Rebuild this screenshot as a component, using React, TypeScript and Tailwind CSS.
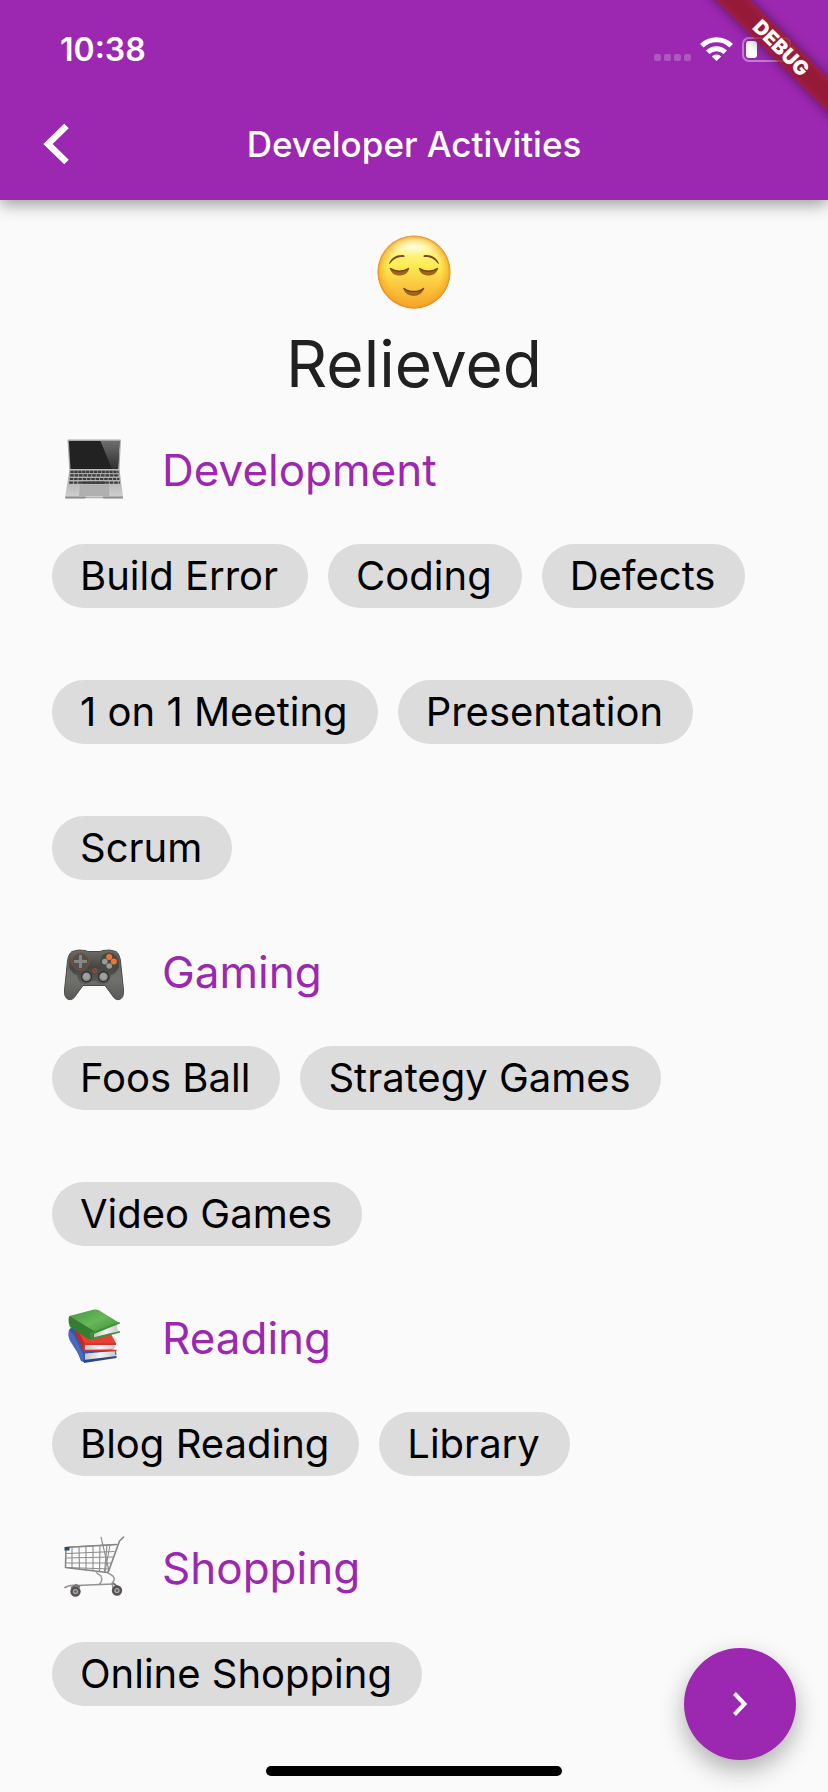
const sections = [
  { title: 'Development', Icon: LaptopIcon, items: ['Build Error', 'Coding', 'Defects', '1 on 1 Meeting', 'Presentation', 'Scrum'] },
  { title: 'Gaming', Icon: GamepadIcon, items: ['Foos Ball', 'Strategy Games', 'Video Games'] },
  { title: 'Reading', Icon: BooksIcon, items: ['Blog Reading', 'Library'] },
  { title: 'Shopping', Icon: CartIcon, items: ['Online Shopping'] },
];

function RelievedFace() {
  return (
    <svg viewBox="0 0 110 100" className="h-[100px] w-[110px]" aria-hidden="true">
      <defs>
        <linearGradient id="faceFill" x1="0" y1="0" x2="0" y2="1">
          <stop offset="0" stopColor="#fff6b8" />
          <stop offset="0.2" stopColor="#fff48c" />
          <stop offset="0.42" stopColor="#fdeb50" />
          <stop offset="0.7" stopColor="#fbc53c" />
          <stop offset="1" stopColor="#f5a52f" />
        </linearGradient>
        <radialGradient id="faceEdge" cx="0.5" cy="0.5" r="0.5">
          <stop offset="0.74" stopColor="#f5a623" stopOpacity="0" />
          <stop offset="0.93" stopColor="#f7a51f" stopOpacity="0.6" />
          <stop offset="1" stopColor="#dd8527" stopOpacity="0.95" />
        </radialGradient>
        <radialGradient id="faceShine" cx="0.5" cy="0.5" r="0.5">
          <stop offset="0" stopColor="#fffef0" stopOpacity="0.9" />
          <stop offset="1" stopColor="#fff9b0" stopOpacity="0" />
        </radialGradient>
      </defs>
      <circle cx="55" cy="52" r="36.5" fill="url(#faceFill)" />
      <circle cx="55" cy="52" r="36.5" fill="url(#faceEdge)" />
      <ellipse cx="55" cy="27" rx="24" ry="10" fill="url(#faceShine)" />
      <g fill="#7b4a1c">
        <path d="M30 43.500C32 37.500 39 34 45 35.200Q46 36 45.300 37C39 36.300 34.500 38.800 31 43.600Q30.200 44.200 30 43.500Z" />
        <path d="M80 43.500C78 37.500 71 34 65 35.200Q64 36 64.700 37C71 36.300 75.500 38.800 79 43.600Q79.800 44.200 80 43.500Z" />
      </g>
      <g fill="#9b651c">
        <path d="M31 48C36 52.300 45 52 50 48C50 53 45 55.600 40.600 55.600C36 55.600 31.500 53 31 48Z" />
        <path d="M79 48C74 52.300 65 52 60 48C60 53 65 55.600 69.400 55.600C74 55.600 78.500 53 79 48Z" />
        <path d="M44.500 68C50 72.500 60 72.500 65 68C64.500 73 59 76 55 76C50 76 45 73 44.500 68Z" />
      </g>
      <g fill="none" stroke="#70431b" strokeWidth="1.500" strokeLinecap="round">
        <path d="M31.500 48.500C36 52 45 52 49.500 48.500" />
        <path d="M60.500 48.500C65 52 74 52 78.500 48.500" />
        <path d="M45 68.500C50 72.500 60 72.500 64.500 68.500" />
      </g>
    </svg>
  );
}

function LaptopIcon() {
  return (
    <svg viewBox="0 0 64 64" className="size-16" aria-hidden="true">
      <defs>
        <linearGradient id="lapGlare" x1="0" y1="0" x2="0" y2="1">
          <stop offset="0" stopColor="#6d6d6d" />
          <stop offset="1" stopColor="#303030" />
        </linearGradient>
        <linearGradient id="lapBase" x1="0" y1="0" x2="0" y2="1">
          <stop offset="0" stopColor="#a2a2a2" />
          <stop offset="1" stopColor="#d2d2d2" />
        </linearGradient>
      </defs>
      <path d="M5.500 2.500Q5.500 1.600 6.500 1.600H58Q59 1.600 58.900 2.500L57.500 31.500H7.200Z" fill="#a9a9a9" />
      <path d="M6.800 3H57.500L56 31H8.500Z" fill="#222" />
      <path d="M38.500 3H57.500L56 31H50Z" fill="url(#lapGlare)" />
      <path d="M7.500 31.500H57.500L61 58.500V60.500H3.200V58.500Z" fill="url(#lapBase)" />
      <path d="M3.200 58.500H23L24.500 59.500H40L41.500 58.500H61V60.600H42L41 60H23.500L22.500 60.600H3.200Z" fill="#8f8f8f" />
      <g fill="none" stroke="#3a3a3a" strokeWidth="2.200">
        <path d="M8.500 33.800H56.600" strokeDasharray="3.200 0.700" />
        <path d="M8.200 37.400H57" strokeDasharray="3.600 0.800" />
        <path d="M7.800 41H57.400" strokeDasharray="3.500 0.800" />
        <path d="M7.200 44.600H58" strokeDasharray="3.700 0.800" />
      </g>
      <path d="M19.500 43.600H43V45.700H19.500Z" fill="#3a3a3a" />
      <path d="M18.500 47.300H46.500L47 57.500H17.500Z" fill="#b0b0b0" stroke="#a0a0a0" strokeWidth="0.500" />
    </svg>
  );
}

function GamepadIcon() {
  return (
    <svg viewBox="0 0 64 64" className="size-16" aria-hidden="true">
      <defs>
        <linearGradient id="padGrip" x1="0" y1="0" x2="0" y2="1">
          <stop offset="0" stopColor="#62635f" />
          <stop offset="0.6" stopColor="#70716d" />
          <stop offset="1" stopColor="#595a57" />
        </linearGradient>
        <linearGradient id="padTop" x1="0" y1="0" x2="0" y2="1">
          <stop offset="0" stopColor="#6b6c68" />
          <stop offset="0.5" stopColor="#454644" />
          <stop offset="1" stopColor="#5d5e5a" />
        </linearGradient>
      </defs>
      <g transform="translate(0 2)">
        <path d="M10 9.500Q17 7 23 8.500L26 9.500H38L41 8.500Q48 7 54 9.500Q57.500 12 58.500 19L61.500 48Q62 56 57.500 57.500Q53 58.500 50 53L43 43.500H21L14 53Q11 58.500 6.500 57.500Q2 56 2.500 48L5.500 19Q6.500 12 10 9.500Z" fill="url(#padGrip)" stroke="#4a4b49" strokeWidth="1" />
        <path d="M10 10Q17 7.500 23 9L26 10H38L41 9Q48 7.500 54 10Q58.500 16 57 25Q54 32 49 33Q48 43 39 42Q36 41 34 39H30Q28 41 25 42Q16 43 15 33Q10 32 7 25Q5.500 16 10 10Z" fill="url(#padTop)" />
        <circle cx="18.500" cy="19.500" r="8.600" fill="#515250" stroke="#9b4c24" strokeWidth="1" />
        <path d="M16.500 12.500H20.500V17.500H25.500V21.500H20.500V26.500H16.500V21.500H11.500V17.500H16.500Z" fill="#858783" stroke="#3c3d3b" strokeWidth="0.600" />
        <circle cx="47" cy="19.500" r="9" fill="#484946" />
        <circle cx="47.200" cy="15" r="3" fill="#f5742b" />
        <circle cx="51.800" cy="19.600" r="3" fill="#f5742b" />
        <circle cx="42.800" cy="19.600" r="2.800" fill="#9a9c98" />
        <circle cx="47.200" cy="24" r="2.800" fill="#9a9c98" />
        <circle cx="32.800" cy="28.500" r="1.900" fill="#873e1c" stroke="#cc622b" strokeWidth="0.600" />
        <g fill="#8b8d89" stroke="#323331" strokeWidth="1.400">
          <circle cx="24.500" cy="34.800" r="5" />
          <circle cx="41.500" cy="34.800" r="5" />
        </g>
        <g fill="#a0a29e">
          <circle cx="24.500" cy="34.300" r="3" />
          <circle cx="41.500" cy="34.300" r="3" />
        </g>
      </g>
    </svg>
  );
}

function BooksIcon() {
  return (
    <svg viewBox="0 0 64 64" className="size-16" aria-hidden="true">
      <defs>
        <linearGradient id="bookGreen" x1="0" y1="0" x2="1" y2="1">
          <stop offset="0" stopColor="#4b9442" />
          <stop offset="0.5" stopColor="#67b857" />
          <stop offset="1" stopColor="#3d8836" />
        </linearGradient>
        <linearGradient id="bookPages" x1="0" y1="0" x2="1" y2="0">
          <stop offset="0" stopColor="#c4c4c7" />
          <stop offset="0.5" stopColor="#f4f4f5" />
          <stop offset="1" stopColor="#c8c8cb" />
        </linearGradient>
      </defs>
      <g transform="translate(0 -3)">
        <path d="M7 27Q8 24 13 25L54 48.500L54.500 52L22 59L19 58Z" fill="#3557a9" />
        <path d="M7 27L12 32L22 53L21 58.500L7.500 37Q5.500 31 7 27Z" fill="#4869bc" />
        <path d="M23 50.500L53 48L53.500 53.500L23 58Z" fill="url(#bookPages)" />
        <path d="M21.500 57L54.500 53V55L22 60Z" fill="#284888" />
        <path d="M14 23L24 22L49 31L54.500 41L49 43L21 43.500L14 30Q13.500 27 14 23Z" fill="#e84036" />
        <path d="M14 24L23 41L22 48L14.500 33Q13 28 14 24Z" fill="#c52824" />
        <path d="M23 41.500L51 41L53.500 44L51.500 46.500L23 47Z" fill="url(#bookPages)" />
        <path d="M22 40.200L54 40.200V42H23V46.800H54.500V48.200H22Q20 44 22 40.200Z" fill="#d2332d" />
        <path d="M7.500 13L31 6.800Q34 6 37 7.300L57.500 20L34 31Q31 30.800 28 28L7 17Q6 14.500 7.500 13Z" fill="url(#bookGreen)" />
        <path d="M7.500 13L32 28V36.500L26 36L8 24Q5.500 18 7.500 13Z" fill="#347e31" />
        <path d="M32 30L56 20Q54 23 56 28L32 35Z" fill="url(#bookPages)" />
        <path d="M30 29L57.500 19L58 20.500L32 31Q30 32 31 34.500L57.500 28L58.300 29.500L30 37Q27 34 28 30Z" fill="#3f9139" />
      </g>
    </svg>
  );
}

function CartIcon() {
  return (
    <svg viewBox="0 0 64 64" className="size-16" aria-hidden="true">
      <g fill="none" stroke="#8c8c8c" strokeWidth="1.100">
        <path d="M6 11L54 8.500M5 17.500L52.500 15.500M4.600 22L51 21M4.500 27L49.500 27M4.500 31.500L48 33" />
        <path d="M10 11V33M17 11L17.500 34M24 10V34.500M31 10V35M38 9L37.500 35M45 9L42.500 36" />
        <path d="M39 1L47 35M48 9L43 36" />
      </g>
      <path d="M4 11.500L54.500 8.500M4 11.500L3.500 31.500L45.500 36.500L47 34L57.500 5L61.500 1" fill="none" stroke="#858585" strokeWidth="1.600" strokeLinecap="round" strokeLinejoin="round" />
      <path d="M34 36.500L39 40C41 44 39 46 37 49M45.500 36.500L51 40Q54 44 50 47L51 52" fill="none" stroke="#9a9a9a" strokeWidth="1.500" />
      <path d="M3 51.500Q8 48.500 15 49.500L38 48.500L52 48" fill="none" stroke="#929292" strokeWidth="1.700" strokeLinecap="round" />
      <path d="M9 52L14 49L18 51M51 47L57 52" fill="none" stroke="#777" strokeWidth="2" />
      <g fill="#aaa" stroke="#575353" strokeWidth="2.600">
        <circle cx="13.500" cy="55.500" r="3.900" />
        <circle cx="55" cy="54.500" r="3.900" />
      </g>
      <g fill="#5c5c5c">
        <circle cx="13.500" cy="55.500" r="1.300" />
        <circle cx="55" cy="54.500" r="1.300" />
      </g>
      <path d="M2.500 11H7.500V14.500H2.500Z" fill="#214c6d" />
    </svg>
  );
}

function StatusIcons() {
  return (
    <svg viewBox="0 0 142 26" className="h-[26px] w-[142px]" aria-hidden="true">
      <g fill="#fff" fillOpacity="0.22">
        <rect x="0" y="17" width="7" height="7" rx="2" />
        <rect x="10" y="17" width="7" height="7" rx="2" />
        <rect x="20" y="17" width="7" height="7" rx="2" />
        <rect x="30" y="17" width="7" height="7" rx="2" />
      </g>
      <g fill="none" stroke="#fff" strokeWidth="5">
        <path d="M47.800 8.700A21 21 0 0 1 77.200 8.700" />
        <path d="M53.800 15.200A12.500 12.500 0 0 1 71.200 15.200" />
      </g>
      <path d="M62.500 24L57.800 19.400A6.800 6.800 0 0 1 67.200 19.400Z" fill="#fff" />
      <rect x="89" y="1" width="47" height="23" rx="6" fill="none" stroke="#fff" strokeOpacity="0.400" strokeWidth="2" />
      <path d="M138 9Q141 10 141 12.500T138 16Z" fill="#fff" fillOpacity="0.400" />
      <rect x="92" y="4" width="11" height="17" rx="3" fill="#fff" />
    </svg>
  );
}

function DebugBanner() {
  return (
    <svg viewBox="0 0 128 128" className="pointer-events-none absolute top-0 right-0 size-32">
      <defs>
        <filter id="ribbonShadow" x="-20%" y="-100%" width="140%" height="300%">
          <feGaussianBlur stdDeviation="6" />
        </filter>
      </defs>
      <g transform="translate(81 48) rotate(45)">
        <rect x="-100" y="-12" width="200" height="24" fill="#000" fillOpacity="0.450" filter="url(#ribbonShadow)" />
        <rect x="-100" y="-12" width="200" height="24" fill="#b71c1c" fillOpacity="0.630" />
        <text x="0" y="7" textAnchor="middle" className="fill-white font-['Inter'] text-[20px] font-black">DEBUG</text>
      </g>
    </svg>
  );
}

export default function App() {
  return (
    <div className="relative min-h-screen overflow-hidden bg-[#fafafa] font-['Inter','Liberation_Sans',sans-serif] text-black">
      <header className="relative bg-[#9c27b0] text-white shadow-[0_4px_16px_rgba(0,0,0,0.4)]">
        <div className="flex h-[88px] items-center justify-between pt-3 pr-8 pl-[60px]">
          <span className="text-[32px] leading-10 font-semibold">10:38</span>
          <StatusIcons />
        </div>
        <div className="grid h-28 grid-cols-[112px_1fr_112px] items-center">
          <button type="button" aria-label="Back" className="flex size-28 items-center justify-center">
            <svg viewBox="0 0 28 42" className="h-[42px] w-7" fill="none" stroke="#fff" strokeWidth="6.500" aria-hidden="true">
              <path d="M24.500 3L6 21L24.500 39" />
            </svg>
          </button>
          <h1 className="text-center text-[35px] leading-[44px] font-medium whitespace-nowrap">Developer Activities</h1>
        </div>
        <DebugBanner />
      </header>

      <main className="px-[52px] pt-5 pb-[86px]">
        <div className="flex flex-col items-center gap-[2px]">
          <RelievedFace />
          <h2 className="text-[64px] leading-[84px] text-[#212121]">Relieved</h2>
        </div>
        <div className="flex flex-col gap-[60px] pt-8">
          {sections.map(({ title, Icon, items }) => (
            <section key={title}>
              <div className="flex h-16 items-center gap-[36px] pl-[10px]">
                <Icon />
                <h3 className="text-[44px] leading-[56px] text-[#9c27b0]">{title}</h3>
              </div>
              <div className="flex flex-wrap gap-x-5 gap-y-[72px] pt-[42px]">
                {items.map((item) => (
                  <button key={item} type="button" className="h-16 rounded-full bg-[#dcdcdc] pr-[30px] pl-7 text-[40px] leading-[64px] whitespace-nowrap">
                    {item}
                  </button>
                ))}
              </div>
            </section>
          ))}
        </div>
      </main>

      <button type="button" aria-label="Next" className="fixed right-8 bottom-8 flex size-28 items-center justify-center rounded-full bg-[#9c27b0] shadow-[0_10px_24px_rgba(0,0,0,0.3)]">
        <svg viewBox="0 0 16 24" className="h-6 w-4" fill="none" stroke="#fff" strokeWidth="4" aria-hidden="true">
          <path d="M2.500 1.500L12.500 12L2.500 22.500" />
        </svg>
      </button>
      <div className="pointer-events-none fixed inset-x-0 bottom-4 flex justify-center">
        <div className="h-[10px] w-[296px] rounded-full bg-black" />
      </div>
    </div>
  );
}
